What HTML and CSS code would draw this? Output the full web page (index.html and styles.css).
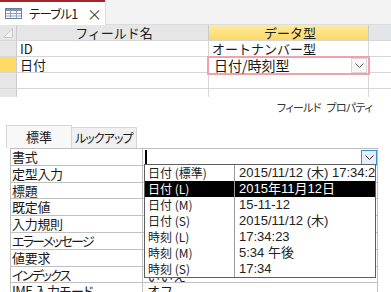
FILE: index.html
```html
<!DOCTYPE html>
<html lang="ja">
<head>
  <meta charset="UTF-8" />
  <title>テーブル1</title>
  <link rel="stylesheet" href="styles.css">
</head>
<body>
  <div class="tabbar">
    <div class="doc-tab">
      <svg class="tab-icon" width="17" height="11" viewBox="0 0 17 11">
        <rect x="0.5" y="0.5" width="16" height="10" fill="#fff" stroke="#6e7f95"/>
        <rect x="1" y="1" width="15" height="2" fill="#7f95b2"/>
        <path d="M1 5.5h15M1 8h15M5.5 3v7.5M11.5 3v7.5" stroke="#8fa3bd" fill="none"/>
      </svg>
      <span class="tab-title">テーブル1</span>
      <span class="tab-close">×</span>
    </div>
    <div class="tab-rest"></div>
  </div>

  <div class="design">
    <div class="row head">
      <div class="sel corner">
        <svg width="10" height="10" viewBox="0 0 10 10"><path d="M9.5 0.5v9h-9z" fill="#f2f2f2" stroke="#c9c9c9"/></svg>
      </div>
      <div class="cell name">フィールド名</div>
      <div class="cell type active-col">データ型</div>
      <div class="cell desc"></div>
    </div>
    <div class="row">
      <div class="sel"></div>
      <div class="cell name">ID</div>
      <div class="cell type">オートナンバー型</div>
      <div class="cell desc"></div>
    </div>
    <div class="row current">
      <div class="sel"></div>
      <div class="cell name">日付</div>
      <div class="cell type">
        <div class="editing">日付/時刻型<span class="drop-btn small">
          <svg width="9" height="5" viewBox="0 0 9 5"><path d="M0.5 0.5l4 4 4-4" fill="none" stroke="#666"/></svg>
        </span></div>
      </div>
      <div class="cell desc"></div>
    </div>
    <div class="row">
      <div class="sel"></div>
      <div class="cell name"></div>
      <div class="cell type"></div>
      <div class="cell desc"></div>
    </div>
    <div class="row">
      <div class="sel"></div>
      <div class="cell name"></div>
      <div class="cell type"></div>
      <div class="cell desc"></div>
    </div>
  </div>

  <div class="props">
    <div class="props-title">フィールド プロパティ</div>
    <div class="prop-tabs">
      <div class="ptab on">標準</div>
      <div class="ptab">ルックアップ</div>
    </div>
    <div class="prop-grid">
      <div class="prow"><div class="plabel">書式</div><div class="pvalue"><span class="caret"></span><span class="drop-btn blue">
        <svg width="9" height="5" viewBox="0 0 9 5"><path d="M0.5 0.5l4 4 4-4" fill="none" stroke="#333"/></svg>
      </span></div></div>
      <div class="prow"><div class="plabel">定型入力</div><div class="pvalue"></div></div>
      <div class="prow"><div class="plabel">標題</div><div class="pvalue"></div></div>
      <div class="prow"><div class="plabel">既定値</div><div class="pvalue"></div></div>
      <div class="prow"><div class="plabel">入力規則</div><div class="pvalue"></div></div>
      <div class="prow"><div class="plabel kana">エラーメッセージ</div><div class="pvalue"></div></div>
      <div class="prow"><div class="plabel">値要求</div><div class="pvalue"></div></div>
      <div class="prow"><div class="plabel kana">インデックス</div><div class="pvalue low">いいえ</div></div>
      <div class="prow"><div class="plabel ime">IME 入力モード</div><div class="pvalue">オフ</div></div>
    </div>

    <div class="format-list">
      <div class="fitem"><span class="fname">日付 (標準)</span><span class="fsample">2015/11/12 (木) 17:34:23</span></div>
      <div class="fitem picked"><span class="fname">日付 (L)</span><span class="fsample">2015年11月12日</span></div>
      <div class="fitem"><span class="fname">日付 (M)</span><span class="fsample">15-11-12</span></div>
      <div class="fitem"><span class="fname">日付 (S)</span><span class="fsample">2015/11/12 (木)</span></div>
      <div class="fitem"><span class="fname">時刻 (L)</span><span class="fsample">17:34:23</span></div>
      <div class="fitem"><span class="fname">時刻 (M)</span><span class="fsample">5:34 午後</span></div>
      <div class="fitem"><span class="fname">時刻 (S)</span><span class="fsample">17:34</span></div>
    </div>
  </div>
</body>
</html>
```

FILE: styles.css
```css
:root {
  --grid-line: #d6d6d6;
  --prop-line: #c0c0c0;
  --head-bg: #e6e6e6;
  --text: #1a1a1a;
  --font-ui: "Noto Sans CJK JP", "Liberation Sans", sans-serif;
  --font-num: "Liberation Sans", "Noto Sans CJK JP", sans-serif;
}

* {
  box-sizing: border-box;
}

html, body {
  margin: 0;
  padding: 0;
  width: 391px;
  height: 292px;
  overflow: hidden;
  background: #fff;
  font-family: var(--font-ui);
  font-size: 13px;
  color: var(--text);
}

/* document tab */
.tabbar {
  display: flex;
  height: 25px;
}

.doc-tab {
  display: flex;
  align-items: center;
  flex: none;
  width: 105px;
  padding: 0 0 1px 5px;
  border-top: 2px solid #a4262c;
  background: #fff;
  white-space: nowrap;
}

.tab-icon {
  flex: none;
}

.tab-title {
  flex: none;
  width: 50px;
  margin-left: 7px;
  font-size: 12.5px;
  font-feature-settings: "palt";
  letter-spacing: -0.8px;
}

.tab-close {
  margin-left: 8px;
  font-size: 15px;
  color: #444;
}

.tab-rest {
  flex: 1;
  background: #f3f3f3;
  border-left: 1px solid #dcdcdc;
  border-bottom: 1px solid #dcdcdc;
}

/* table design grid */
.design {
  height: 72px;
  overflow: hidden;
}

.row {
  display: flex;
  height: 16px;
  border-bottom: 1px solid var(--grid-line);
}

.sel {
  width: 17px;
  flex: none;
  background: var(--head-bg);
  border-right: 1px solid #cbcbcb;
}

.current .sel {
  background: #ffd966;
}

.corner {
  display: flex;
  align-items: flex-end;
  justify-content: flex-end;
  padding: 0 3px 2px 0;
}

.cell {
  height: 15px;
  padding-left: 3px;
  line-height: 15px;
  white-space: nowrap;
  border-right: 1px solid var(--grid-line);
}

.name {
  width: 192px;
}

.type {
  width: 160px;
  position: relative;
}

.desc {
  flex: 1;
  border-right: none;
}

.head .cell {
  background: var(--head-bg);
  text-align: center;
  color: #222;
  border-right-color: #cbcbcb;
}

.head .active-col {
  background: linear-gradient(#fdeaa0, #fcd964);
}

.head .desc {
  background: #e3e5e8;
}

.editing {
  position: absolute;
  left: -2px;
  top: -1px;
  width: 163px;
  height: 19px;
  padding-left: 5px;
  border: 2px solid #f0a2aa;
  background: #fff;
  font-size: 14px;
  line-height: 15px;
  z-index: 1;
}

.drop-btn {
  position: absolute;
  display: flex;
  align-items: center;
  justify-content: center;
}

.drop-btn.small {
  right: 1px;
  top: 0;
  width: 16px;
  height: 15px;
  border: 1px solid #d8d8d8;
  background: #f7f7f7;
}

/* properties pane */
.props {
  position: relative;
  height: 195px;
}

.props-title {
  text-align: right;
  padding: 4px 19px 0 0;
  font-size: 11px;
  line-height: 12px;
  color: #333;
  font-feature-settings: "palt";
  letter-spacing: -0.7px;
  word-spacing: 4px;
}

.prop-tabs {
  display: flex;
  align-items: flex-end;
  margin: 12px 0 0 6px;
  height: 23px;
}

.ptab {
  height: 21px;
  padding: 0 3px;
  border: 1px solid #d6d6d6;
  border-bottom: none;
  border-left: none;
  background: #f0f0f0;
  font-size: 12px;
  line-height: 20px;
  font-feature-settings: "palt";
  letter-spacing: -0.9px;
}

.ptab.on {
  width: 66px;
  height: 23px;
  border-left: 1px solid #d6d6d6;
  text-align: center;
  background: #f8f8f8;
  font-size: 13px;
  line-height: 22px;
  letter-spacing: 0;
}

.prop-grid {
  width: 368px;
  margin-left: 10px;
  border-top: 1px solid var(--prop-line);
}

.prow {
  display: flex;
  height: 16.8px;
  border-bottom: 1px solid var(--prop-line);
  border-left: 1px solid var(--prop-line);
}

.plabel {
  width: 132px;
  flex: none;
  padding-left: 1px;
  border-right: 1px solid var(--prop-line);
  line-height: 15px;
  white-space: nowrap;
  font-feature-settings: "palt";
  letter-spacing: -0.3px;
}

.plabel.kana {
  letter-spacing: -1.8px;
}

.plabel.ime {
  letter-spacing: -0.6px;
}

.pvalue {
  flex: 1;
  position: relative;
  padding-left: 4px;
  line-height: 15px;
  border-right: 1px solid var(--prop-line);
  white-space: nowrap;
}

.pvalue.low {
  line-height: 13px;
  padding-top: 2px;
}

.caret {
  position: absolute;
  left: 2px;
  top: 1px;
  width: 2px;
  height: 14px;
  background: #000;
}

.drop-btn.blue {
  right: 0;
  top: 1px;
  width: 16px;
  height: 15px;
  border: 1px solid #3d8ed6;
  background: #e6f0fa;
}

/* format dropdown */
.format-list {
  position: absolute;
  left: 144px;
  top: 67px;
  width: 232px;
  border: 1px solid #5f5f5f;
  background: #fff;
  font-size: 12px;
  z-index: 2;
}

.fitem {
  display: flex;
  height: 16px;
  line-height: 16px;
  color: #222;
}

.fitem.picked {
  background: #000;
  color: #fff;
}

.fname {
  width: 90px;
  flex: none;
  padding-left: 3px;
  border-right: 1px solid #9a9a9a;
  white-space: nowrap;
}

.fsample {
  padding-left: 4px;
  white-space: nowrap;
  overflow: hidden;
  font-family: var(--font-num);
  font-size: 13px;
}
```
